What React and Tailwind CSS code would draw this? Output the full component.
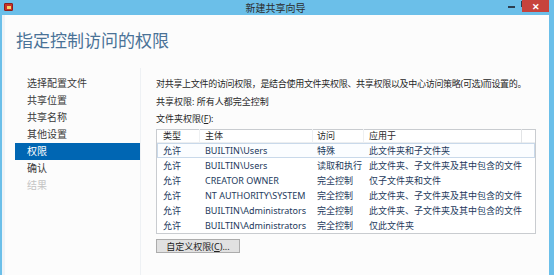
import React from "react";

const navItems = [
    { label: "选择配置文件" },
    { label: "共享位置" },
    { label: "共享名称" },
    { label: "其他设置" },
    { label: "权限", active: true },
    { label: "确认" },
    { label: "结果", disabled: true },
];

const rows = [
    ["允许", "BUILTIN\\Users", "特殊", "此文件夹和子文件夹"],
    ["允许", "BUILTIN\\Users", "读取和执行", "此文件夹、子文件夹及其中包含的文件"],
    ["允许", "CREATOR OWNER", "完全控制", "仅子文件夹和文件"],
    ["允许", "NT AUTHORITY\\SYSTEM", "完全控制", "此文件夹、子文件夹及其中包含的文件"],
    ["允许", "BUILTIN\\Administrators", "完全控制", "此文件夹、子文件夹及其中包含的文件"],
    ["允许", "BUILTIN\\Administrators", "完全控制", "仅此文件夹"],
];

function Row({ cells, focused }) {
    return (
        <div
            className={`flex h-[15px] items-center text-[#23395c] ${
                focused ? "border border-[#c9d9ea] bg-[#fbfdff]" : "border border-transparent"
            }`}
        >
            <div className="w-[42px] pl-[5px]">{cells[0]}</div>
            <div className="w-[113px] pl-[5px] whitespace-nowrap">{cells[1]}</div>
            <div className="w-[51px] pl-[4px] whitespace-nowrap">{cells[2]}</div>
            <div className="w-[158px] pl-[5px] whitespace-nowrap">{cells[3]}</div>
        </div>
    );
}

export default function App() {
    return (
        <div
            className="w-[554px] h-[275px] overflow-hidden bg-[#6bbfe9] flex flex-col pl-[2px] pr-[5px]"
            style={{ fontFamily: '"Noto Sans", "Noto Sans CJK SC", sans-serif' }}
        >
            {/* title bar */}
            <div className="relative h-[15px] shrink-0 flex items-center justify-center">
                <div className="absolute left-[2px] top-[3px] w-[9px] h-[8px] rounded-[1px] bg-[#c8312a] border border-[#8e1f1a]">
                    <div className="mx-auto mt-[2px] w-[4px] h-[3px] bg-[#f5d36a]" />
                </div>
                <span className="text-[10px] text-[#2c2c2c] leading-none">新建共享向导</span>
                <div className="absolute right-[34px] top-[6px] w-[7px] h-[2px] bg-[#2c3e50]" />
                <div className="absolute right-[21px] top-[1px] w-[7px] h-[6px] border border-[#2c3e50]" />
                <div className="absolute right-0 top-0 w-[27px] h-[12px] bg-[#c7433c] flex items-center justify-center">
                    <span className="text-white text-[9px] leading-none font-bold">✕</span>
                </div>
            </div>

            {/* body */}
            <div className="flex-1 bg-[#fcfcfc] flex flex-col border-l-[3px] border-[#eef3f7]">
                <div className="h-[53px] shrink-0 pl-[11px] pt-[16px]">
                    <h1 className="text-[17px] leading-[20px] text-[#4a7297]">指定控制访问的权限</h1>
                </div>

                <div className="flex flex-1">
                    {/* nav */}
                    <div className="w-[136px] pt-[7px] pl-[10px] border-r border-[#eef1f4]">
                        {navItems.map((item) => (
                            <div
                                key={item.label}
                                className={`h-[17px] flex items-center pl-[12px] text-[10px] ${
                                    item.active
                                        ? "bg-[#0066b3] text-white"
                                        : item.disabled
                                        ? "text-[#c4c4c4]"
                                        : "text-[#3a3a3a]"
                                }`}
                            >
                                {item.label}
                            </div>
                        ))}
                    </div>

                    {/* content */}
                    <div className="flex-1 pl-[15px] pt-[10px] text-[9px] text-[#262626]">
                        <p className="leading-[12px] whitespace-nowrap tracking-[-0.3px]">
                            对共享上文件的访问权限，是结合使用文件夹权限、共享权限以及中心访问策略(可选)而设置的。
                        </p>
                        <p className="leading-[12px] mt-[6px]">共享权限: 所有人都完全控制</p>
                        <p className="leading-[12px] mt-[5px]">
                            文件夹权限(<span className="underline">F</span>):
                        </p>

                        <div className="mt-[4px] w-[380px] border border-[#c9ccd0] bg-white">
                            <div className="flex h-[13px] items-center text-[#2a2a2a] border-b border-[#eceef0]">
                                <div className="w-[43px] pl-[6px] border-r border-[#eef0f2]">类型</div>
                                <div className="w-[113px] pl-[5px] border-r border-[#eef0f2]">主体</div>
                                <div className="w-[51px] pl-[4px] border-r border-[#eef0f2]">访问</div>
                                <div className="w-[158px] pl-[5px] border-r border-[#e2e4e6]">应用于</div>
                            </div>
                            {rows.map((r, i) => (
                                <Row key={i} cells={r} focused={i === 0} />
                            ))}
                        </div>

                        <button className="mt-[5px] w-[84px] h-[14px] bg-[#e1e1e1] border border-[#acacac] text-[9px] leading-none text-[#222] flex items-center justify-center">
                            自定义权限(<span className="underline">C</span>)...
                        </button>
                    </div>
                </div>
            </div>
        </div>
    );
}
